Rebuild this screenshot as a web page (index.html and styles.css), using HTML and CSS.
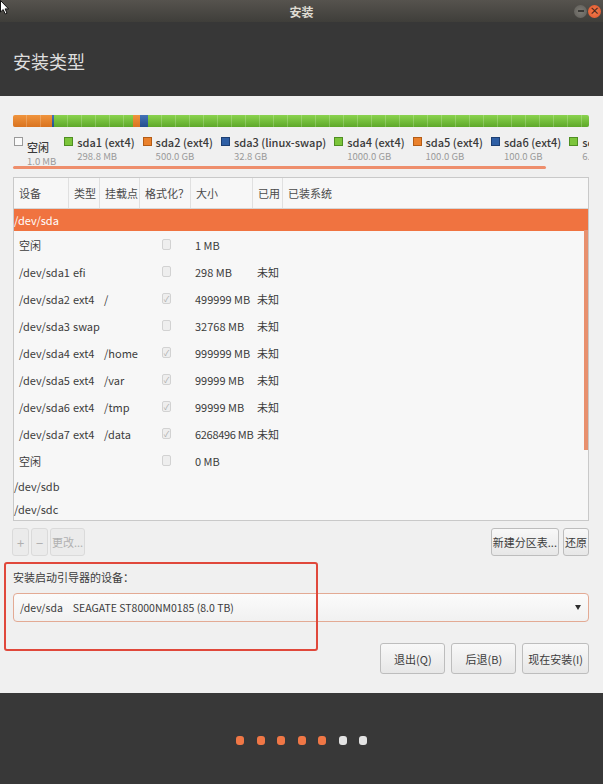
FILE: index.html
```html
<!DOCTYPE html>
<html lang="zh-CN">
  <head>
    <meta charset="UTF-8" />
    <meta name="viewport" content="width=device-width, initial-scale=1.0" />
    <link rel="stylesheet" href="styles.css">
    <title>安装</title>
  </head>
  <body>
    <div class="window">
      <svg class="cursor" width="10" height="15" viewBox="0 0 10 15">
        <path d="M0.5 0.5 L0.5 12 L3.2 9.6 L5.2 14 L7 13.2 L5.1 8.9 L8.6 8.9 Z" fill="#fff" stroke="#111" stroke-width="1" />
      </svg>

      <div class="titlebar">
        <span></span>
        <span class="titlebar__title">安装</span>
        <div class="titlebar__controls">
          <span class="control control_min"></span>
          <span class="control control_close">×</span>
        </div>
      </div>

      <div class="header">
        <h1 class="title">安装类型</h1>
      </div>

      <div class="content">
        <div class="bar">
          <span class="bar__seg bar__seg_orange" style="width: 39px"></span>
          <span class="bar__seg bar__seg_blue" style="width: 2px"></span>
          <span class="bar__seg bar__seg_green" style="width: 79px"></span>
          <span class="bar__seg bar__seg_orange" style="width: 7px"></span>
          <span class="bar__seg bar__seg_blue" style="width: 8px"></span>
          <span class="bar__seg bar__seg_green"></span>
        </div>

        <div class="legend">
          <div class="legend__list">
            <div class="legend__item">
              <span class="legend__box legend__box_free"></span>
              <div class="legend__text legend__text_free">
                <div class="legend__name">空闲</div>
                <div class="legend__size">1.0 MB</div>
              </div>
            </div>
            <div class="legend__item">
              <span class="legend__box legend__box_green"></span>
              <div class="legend__text">
                <div class="legend__name">sda1 (ext4)</div>
                <div class="legend__size">298.8 MB</div>
              </div>
            </div>
            <div class="legend__item">
              <span class="legend__box legend__box_orange"></span>
              <div class="legend__text">
                <div class="legend__name">sda2 (ext4)</div>
                <div class="legend__size">500.0 GB</div>
              </div>
            </div>
            <div class="legend__item">
              <span class="legend__box legend__box_blue"></span>
              <div class="legend__text">
                <div class="legend__name">sda3 (linux-swap)</div>
                <div class="legend__size">32.8 GB</div>
              </div>
            </div>
            <div class="legend__item">
              <span class="legend__box legend__box_green"></span>
              <div class="legend__text">
                <div class="legend__name">sda4 (ext4)</div>
                <div class="legend__size">1000.0 GB</div>
              </div>
            </div>
            <div class="legend__item">
              <span class="legend__box legend__box_orange"></span>
              <div class="legend__text">
                <div class="legend__name">sda5 (ext4)</div>
                <div class="legend__size">100.0 GB</div>
              </div>
            </div>
            <div class="legend__item">
              <span class="legend__box legend__box_blue"></span>
              <div class="legend__text">
                <div class="legend__name">sda6 (ext4)</div>
                <div class="legend__size">100.0 GB</div>
              </div>
            </div>
            <div class="legend__item">
              <span class="legend__box legend__box_green"></span>
              <div class="legend__text">
                <div class="legend__name">sda7 (ext4)</div>
                <div class="legend__size">6.3 TB</div>
              </div>
            </div>
          </div>
        </div>
        <div class="legend__scroll"></div>

        <div class="parts">
          <div class="parts__head">
            <span class="parts__th">设备</span>
            <span class="parts__th">类型</span>
            <span class="parts__th">挂载点</span>
            <span class="parts__th">格式化？</span>
            <span class="parts__th">大小</span>
            <span class="parts__th">已用</span>
            <span class="parts__th">已装系统</span>
          </div>

          <div class="parts__row parts__row_disk parts__row_selected">
            <span class="parts__td">/dev/sda</span>
          </div>
          <div class="parts__row">
            <span class="parts__td">空闲</span><span class="parts__td"></span><span class="parts__td"></span>
            <span class="parts__td"><i class="check"></i></span>
            <span class="parts__td">1 MB</span><span class="parts__td"></span><span class="parts__td"></span>
          </div>
          <div class="parts__row">
            <span class="parts__td">/dev/sda1</span><span class="parts__td">efi</span><span class="parts__td"></span>
            <span class="parts__td"><i class="check"></i></span>
            <span class="parts__td">298 MB</span><span class="parts__td">未知</span><span class="parts__td"></span>
          </div>
          <div class="parts__row">
            <span class="parts__td">/dev/sda2</span><span class="parts__td">ext4</span><span class="parts__td">/</span>
            <span class="parts__td"><i class="check check_on"></i></span>
            <span class="parts__td">499999 MB</span><span class="parts__td">未知</span><span class="parts__td"></span>
          </div>
          <div class="parts__row">
            <span class="parts__td">/dev/sda3</span><span class="parts__td">swap</span><span class="parts__td"></span>
            <span class="parts__td"><i class="check"></i></span>
            <span class="parts__td">32768 MB</span><span class="parts__td">未知</span><span class="parts__td"></span>
          </div>
          <div class="parts__row">
            <span class="parts__td">/dev/sda4</span><span class="parts__td">ext4</span><span class="parts__td">/home</span>
            <span class="parts__td"><i class="check check_on"></i></span>
            <span class="parts__td">999999 MB</span><span class="parts__td">未知</span><span class="parts__td"></span>
          </div>
          <div class="parts__row">
            <span class="parts__td">/dev/sda5</span><span class="parts__td">ext4</span><span class="parts__td">/var</span>
            <span class="parts__td"><i class="check check_on"></i></span>
            <span class="parts__td">99999 MB</span><span class="parts__td">未知</span><span class="parts__td"></span>
          </div>
          <div class="parts__row">
            <span class="parts__td">/dev/sda6</span><span class="parts__td">ext4</span><span class="parts__td">/tmp</span>
            <span class="parts__td"><i class="check check_on"></i></span>
            <span class="parts__td">99999 MB</span><span class="parts__td">未知</span><span class="parts__td"></span>
          </div>
          <div class="parts__row">
            <span class="parts__td">/dev/sda7</span><span class="parts__td">ext4</span><span class="parts__td">/data</span>
            <span class="parts__td"><i class="check check_on"></i></span>
            <span class="parts__td parts__td_tight">6268496 MB</span><span class="parts__td">未知</span><span class="parts__td"></span>
          </div>
          <div class="parts__row">
            <span class="parts__td">空闲</span><span class="parts__td"></span><span class="parts__td"></span>
            <span class="parts__td"><i class="check"></i></span>
            <span class="parts__td">0 MB</span><span class="parts__td"></span><span class="parts__td"></span>
          </div>
          <div class="parts__row parts__row_disk">
            <span class="parts__td">/dev/sdb</span>
          </div>
          <div class="parts__row parts__row_disk">
            <span class="parts__td">/dev/sdc</span>
          </div>

          <div class="parts__scrollbar"></div>
        </div>

        <div class="tools">
          <div class="tools__group">
            <button class="button button_small" disabled>+</button>
            <button class="button button_small" disabled>−</button>
            <button class="button" disabled>更改...</button>
          </div>
          <div class="tools__group tools__group_right">
            <button class="button">新建分区表...</button>
            <button class="button">还原</button>
          </div>
        </div>

        <div class="boot">
          <p class="boot__label">安装启动引导器的设备：</p>
          <div class="combo">
            <span class="combo__value">
              <span>/dev/sda</span>
              <span>SEAGATE ST8000NM0185 (8.0 TB)</span>
            </span>
            <span class="combo__arrow"></span>
          </div>
          <div class="boot__mark"></div>
        </div>

        <div class="actions">
          <button class="button button_big">退出(Q)</button>
          <button class="button button_big">后退(B)</button>
          <button class="button button_big">现在安装(I)</button>
        </div>
      </div>

      <div class="footer">
        <span class="dot"></span>
        <span class="dot"></span>
        <span class="dot"></span>
        <span class="dot"></span>
        <span class="dot"></span>
        <span class="dot dot_todo"></span>
        <span class="dot dot_todo"></span>
      </div>
    </div>
  </body>
</html>
```

FILE: styles.css
```css
*,
*::after,
*::before {
  box-sizing: border-box;
  margin: 0;
  padding: 0;
}

body {
  background: #383838;
  font-family: "Noto Sans CJK SC", "Noto Sans", sans-serif;
  font-size: 11px;
  color: #3c3c3c;
}

.window {
  position: relative;
  width: 603px;
  height: 784px;
  overflow: hidden;
}

.cursor {
  position: absolute;
  left: 0;
  top: 0;
  z-index: 5;
}

/* title bar */

.titlebar {
  display: grid;
  grid-template-columns: 1fr auto 1fr;
  align-items: center;
  height: 22px;
  background: linear-gradient(#56534e, #3f3e3a);
  color: #dfdbd2;
  font-size: 12px;
  font-weight: 700;
}

.titlebar__controls {
  justify-self: end;
  display: flex;
  gap: 1px;
  padding-right: 2px;
}

.control {
  display: flex;
  align-items: center;
  justify-content: center;
  width: 13px;
  height: 13px;
  border-radius: 50%;
  font-size: 10px;
  line-height: 1;
}

.control_min {
  background: radial-gradient(#7d7b75, #5e5c57);
}

.control_min::before {
  content: "";
  width: 6px;
  height: 2px;
  background: #3a3936;
}

.control_close {
  background: radial-gradient(#f47d4f, #e0552b);
  color: #4a2417;
  font-weight: 700;
}

.header {
  display: flex;
  align-items: center;
  height: 74px;
  padding: 4px 13px 0;
  background: #373737;
}

.title {
  font-size: 18px;
  font-weight: 400;
  color: #dedede;
}

/* main area */

.content {
  position: relative;
  height: 597px;
  padding: 19px 14px 0 13px;
  background: #f0f0f0;
}

.bar {
  display: flex;
  height: 12px;
  border-radius: 2px;
  overflow: hidden;
  box-shadow: inset 0 -1px rgba(0, 0, 0, 0.15);
}

.bar__seg {
  height: 100%;
  background-image: repeating-linear-gradient(
      90deg,
      transparent 0 13px,
      rgba(255, 255, 255, 0.2) 13px 14px
    ),
    linear-gradient(var(--top), var(--bottom));
}

.bar__seg:last-child {
  flex: 1;
}

.bar__seg_green {
  --top: #8ad34e;
  --bottom: #5ea82a;
}

.bar__seg_orange {
  --top: #f0943d;
  --bottom: #d9731f;
}

.bar__seg_blue {
  --top: #4574b8;
  --bottom: #244f8e;
}

.legend {
  height: 39px;
  padding-top: 8px;
  overflow: hidden;
}

.legend__list {
  display: flex;
  gap: 8px;
  white-space: nowrap;
  padding-left: 1px;
}

.legend__item {
  display: flex;
  align-items: flex-start;
  gap: 4px;
}

.legend__box {
  flex: none;
  width: 9px;
  height: 9px;
  margin-top: 2px;
  border: 1px solid;
}

.legend__box_free {
  background: #fafafa;
  border-color: #9a9a9a;
}

.legend__box_green {
  background: #7cc53b;
  border-color: #4f8f22;
}

.legend__box_orange {
  background: #ea812c;
  border-color: #b45c16;
}

.legend__box_blue {
  background: #2f5fa5;
  border-color: #1d3f73;
}

.legend__text_free {
  padding-top: 5px;
}

.legend__name {
  font-size: 11px;
  font-weight: 500;
  line-height: 15px;
  color: #3a3a3a;
}

.legend__size {
  font-size: 9.5px;
  line-height: 13px;
  color: #9a9a9a;
}

.legend__scroll {
  width: 533px;
  height: 3px;
  border-radius: 2px;
  background: #ee8e6c;
}

/* partitions table */

.parts {
  position: relative;
  margin-top: 8px;
  border: 1px solid #c9c9c9;
  background: #f7f7f7;
}

.parts__head,
.parts__row {
  display: grid;
  grid-template-columns: 55px 31px 40px 51px 62px 30px 1fr;
  align-items: center;
}

.parts__head {
  height: 31px;
  border-bottom: 1px solid #d6d6d6;
  color: #4a4a4a;
}

.parts__th {
  height: 100%;
  padding-left: 5px;
  line-height: 30px;
  border-right: 1px solid #e0e0e0;
  white-space: nowrap;
}

.parts__th:last-child {
  border-right: none;
}

.parts__row {
  height: 27px;
}

.parts__td {
  padding-left: 4px;
  white-space: nowrap;
}

.parts__td:first-child {
  padding-left: 5px;
}

.parts__td_tight {
  letter-spacing: -0.3px;
}

.parts__row_disk {
  height: 23px;
}

.parts__row_disk .parts__td {
  padding-left: 0;
}

.parts__row_selected {
  height: 22px;
  background: #f07340;
  color: #fff;
}

.parts__scrollbar {
  position: absolute;
  right: 0;
  top: 52px;
  width: 4px;
  height: 220px;
  background: #e8906e;
}

.check {
  display: flex;
  align-items: center;
  justify-content: center;
  width: 9px;
  height: 11px;
  margin-left: 18px;
  border: 1px solid #d2d2d2;
  border-radius: 2px;
  background: #eeeeee;
  font-style: normal;
}

.check_on::after {
  content: "✓";
  font-size: 8px;
  line-height: 1;
  color: #a9a9a9;
}

/* buttons */

.button {
  height: 28px;
  padding: 0 1px;
  border: 1px solid #bdbdbd;
  border-radius: 3px;
  background: linear-gradient(#f8f8f8, #e7e7e7);
  font-family: inherit;
  font-size: 11px;
  color: #3c3c3c;
}

.button:disabled {
  border-color: #dadada;
  background: #ebebeb;
  color: #b0b0b0;
}

.button_small {
  width: 17px;
  padding: 0;
  font-size: 13px;
}

.button_big {
  height: 31px;
  min-width: 65px;
  padding: 0 5px;
}

.tools {
  display: flex;
  justify-content: space-between;
  margin-top: 7px;
  margin-left: -1px;
}

.tools__group {
  display: flex;
  gap: 2px;
}

.tools__group_right {
  gap: 4px;
}

/* boot loader */

.boot {
  position: relative;
}

.boot__label {
  margin-top: 14px;
  line-height: 14px;
}

.combo {
  display: flex;
  align-items: center;
  justify-content: space-between;
  height: 29px;
  margin-top: 9px;
  padding: 0 6px;
  border: 1px solid #e3aa94;
  border-radius: 4px;
  background: linear-gradient(#fbfbfb, #f1f1f1);
  font-size: 10.5px;
}

.combo__value {
  display: flex;
  gap: 10px;
}

.combo__arrow {
  width: 0;
  height: 0;
  margin-right: 1px;
  border-left: 3px solid transparent;
  border-right: 3px solid transparent;
  border-top: 5px solid #2e2e2e;
}

.boot__mark {
  position: absolute;
  left: -9px;
  top: -8px;
  width: 314px;
  height: 89px;
  border: 2px solid #e0483b;
  border-radius: 3px;
}

.actions {
  display: flex;
  justify-content: flex-end;
  gap: 6px;
  margin-top: 21px;
}

/* progress */

.footer {
  display: flex;
  align-items: center;
  justify-content: center;
  gap: 12.5px;
  height: 91px;
  padding-top: 3px;
  background: #383838;
}

.dot {
  width: 8px;
  height: 9px;
  border-radius: 3px;
  background: #f07746;
}

.dot_todo {
  background: #e3e3e3;
}
```
